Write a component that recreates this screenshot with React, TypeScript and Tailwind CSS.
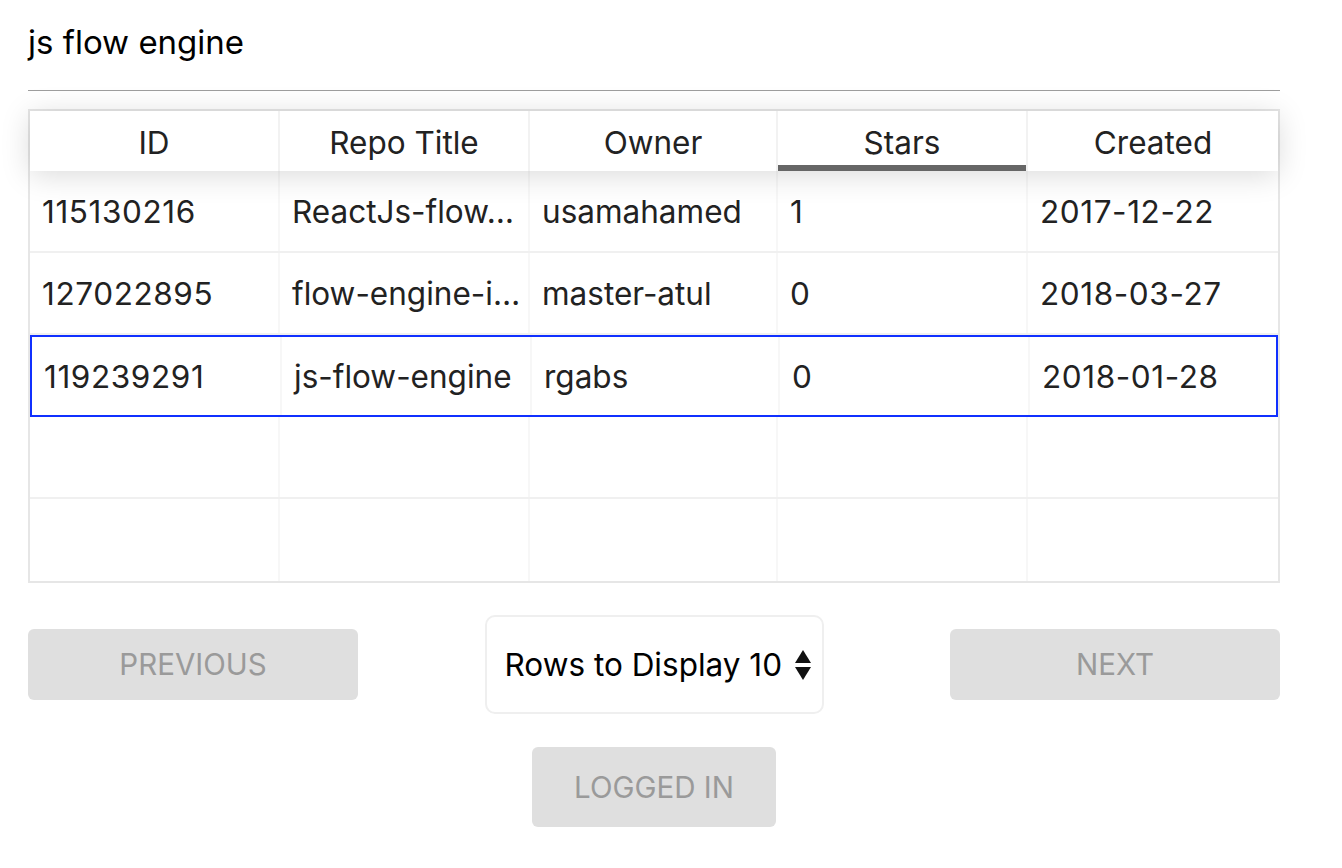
import React from "react";

const rows = [
  { id: "115130216", title: "ReactJs-flow…", owner: "usamahamed", stars: "1", created: "2017-12-22" },
  { id: "127022895", title: "flow-engine-i…", owner: "master-atul", stars: "0", created: "2018-03-27" },
  { id: "119239291", title: "js-flow-engine", owner: "rgabs", stars: "0", created: "2018-01-28", selected: true },
  null,
  null,
];

const headers = ["ID", "Repo Title", "Owner", "Stars", "Created"];
const widths = ["w-[250px]", "w-[250px]", "w-[248px]", "w-[250px]", "flex-1"];

export default function App() {
  return (
    <div
      className="min-h-screen bg-white text-[#222]"
      style={{ fontFamily: "Inter, 'Noto Sans', sans-serif" }}
    >
      <div className="ml-[28px] w-[1252px] pt-[22px]">
        <h1 className="text-[33px] leading-[40px] text-black font-normal">js flow engine</h1>
        <div className="mt-[28px] border-t border-[#9e9e9e]" />
        <div className="mt-[18px] border-2 border-[#e6e6e6]">
          <div className="relative z-10 flex h-[60px] bg-white shadow-[0_4px_30px_0_rgba(0,0,0,0.15)]">
            {headers.map((h, i) => (
              <div
                key={h}
                className={
                  "flex shrink-0 items-center justify-center pt-[3px] text-[31.5px] " +
                  widths[i] +
                  " " +
                  (i < 4 ? "border-r-2 border-[#f2f2f2] " : "") +
                  (h === "Stars" ? "shadow-[inset_0_-6px_0_0_rgba(0,0,0,0.6)]" : "")
                }
              >
                {h}
              </div>
            ))}
          </div>
          {rows.map((r, idx) => (
            <div
              key={idx}
              className={
                "flex h-[82px] " +
                (r && r.selected
                  ? "border-2 border-[#1030ff] "
                  : idx < 4
                  ? "border-b-2 border-[#f0f0f0] "
                  : "")
              }
            >
              {[r?.id, r?.title, r?.owner, r?.stars, r?.created].map((v, i) => (
                <div
                  key={i}
                  className={
                    "flex shrink-0 items-center overflow-hidden whitespace-nowrap px-[12px] pt-[1px] text-[31.5px] " +
                    widths[i] +
                    " " +
                    (i === 0 || i === 4 ? "tracking-[0.6px] " : "") +
                    (i < 4 ? "border-r-2 border-[#f7f7f7]" : "")
                  }
                >
                  {v ?? ""}
                </div>
              ))}
            </div>
          ))}
        </div>
        <div className="mt-[32px] flex items-center justify-between">
          <button className="h-[71px] w-[330px] rounded-[6px] bg-[#dfdfdf] text-[29.5px] uppercase text-[#9a9a9a]">
            Previous
          </button>
          <div className="flex h-[99px] w-[339px] items-center rounded-[10px] border-2 border-[#efefef] pl-[18px]">
            <span className="text-[31.5px] text-black">Rows to Display 10</span>
            <svg className="ml-[13px]" width="16" height="30" viewBox="0 0 16 30">
              <path d="M8 0 L16 13 L0 13 Z" fill="#111" />
              <path d="M0 17 L16 17 L8 30 Z" fill="#111" />
            </svg>
          </div>
          <button className="h-[71px] w-[330px] rounded-[6px] bg-[#dfdfdf] text-[29.5px] uppercase text-[#9a9a9a]">
            Next
          </button>
        </div>
        <div className="mt-[33px] flex justify-center">
          <button className="h-[80px] w-[244px] rounded-[6px] bg-[#dfdfdf] text-[29.5px] uppercase text-[#9a9a9a]">
            Logged In
          </button>
        </div>
      </div>
    </div>
  );
}
